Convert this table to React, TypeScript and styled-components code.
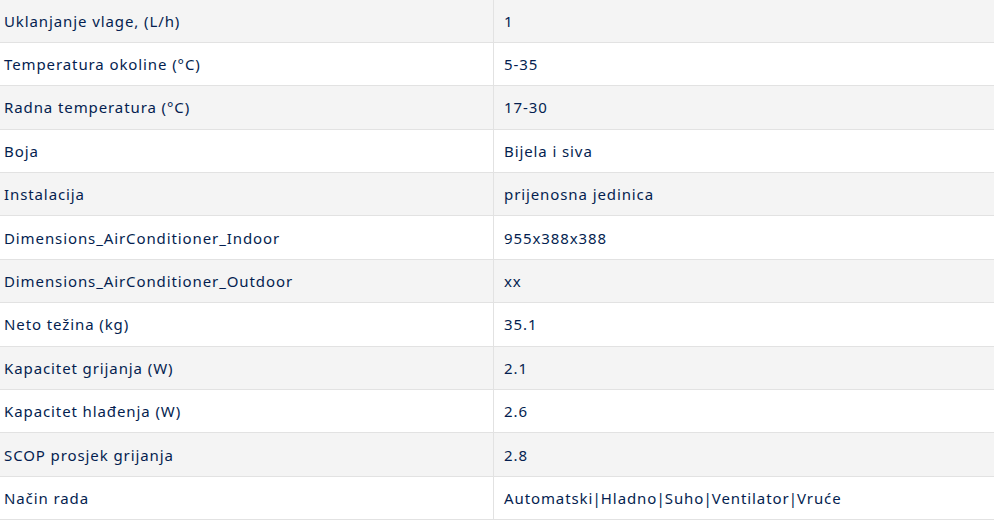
import { createGlobalStyle } from "styled-components";
import styled from "styled-components";

const GlobalStyle = createGlobalStyle`
    html, body {
        margin: 0;
        padding: 0;
        background: #ffffff;
    }
`;

interface Spec {
    label: string;
    value: string;
}

const specs: Spec[] = [
    { label: "Uklanjanje vlage, (L/h)", value: "1" },
    { label: "Temperatura okoline (°C)", value: "5-35" },
    { label: "Radna temperatura (°C)", value: "17-30" },
    { label: "Boja", value: "Bijela i siva" },
    { label: "Instalacija", value: "prijenosna jedinica" },
    { label: "Dimensions_AirConditioner_Indoor", value: "955x388x388" },
    { label: "Dimensions_AirConditioner_Outdoor", value: "xx" },
    { label: "Neto težina (kg)", value: "35.1" },
    { label: "Kapacitet grijanja (W)", value: "2.1" },
    { label: "Kapacitet hlađenja (W)", value: "2.6" },
    { label: "SCOP prosjek grijanja", value: "2.8" },
    { label: "Način rada", value: "Automatski|Hladno|Suho|Ventilator|Vruće" }
];

const Table = styled.div`
    width: 994px;
    margin-top: -0.6px;
    font-family: "Noto Sans", sans-serif;
    font-size: 15px;
    letter-spacing: 0.9px;
    color: #041e50;
`;

const Row = styled.div<{ $shaded: boolean }>`
    display: grid;
    grid-template-columns: 494px 1fr;
    height: 43.4px;
    box-sizing: border-box;
    border-bottom: 1px solid #e2e2e2;
    background: ${p => (p.$shaded ? "#f4f4f4" : "#ffffff")};
`;

const Label = styled.div`
    display: flex;
    align-items: center;
    padding-left: 4px;
    border-right: 1px solid #e2e2e2;
`;

const Value = styled.div`
    display: flex;
    align-items: center;
    padding-left: 10px;
    white-space: pre;
`;

const Pipe = styled.span`
    margin: 0 -0.8px;
`;

function renderValue(value: string) {
    const parts = value.split("|");
    return parts.map((part, i) => (
        <span key={i}>
            {part}
            {i < parts.length - 1 && <Pipe>|</Pipe>}
        </span>
    ));
}

export default function App() {
    return (
        <>
            <GlobalStyle />
            <Table>
                {specs.map((s, i) => (
                    <Row key={s.label} $shaded={i % 2 === 0}>
                        <Label>{s.label}</Label>
                        <Value>{renderValue(s.value)}</Value>
                    </Row>
                ))}
            </Table>
        </>
    );
}
